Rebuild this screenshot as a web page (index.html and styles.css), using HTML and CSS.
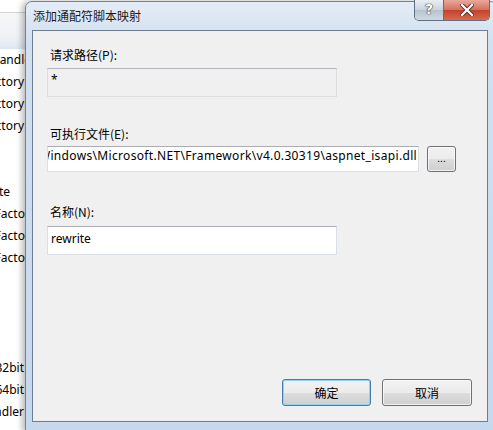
FILE: index.html
```html
<!DOCTYPE html>
<html lang="zh-CN">
  <head>
    <meta charset="utf-8">
    <link rel="stylesheet" href="styles.css">
  </head>
  <body>
    <div class="backlist">
      <div class="back-head"></div>
      <div class="back-sel"></div>
      <div class="row cut"><span>ISAPIHandler</span></div>
      <div class="row"><span>StaticDirectory</span></div>
      <div class="row"><span>StaticDirectory</span></div>
      <div class="row"><span>StaticDirectory</span></div>
      <div class="row"></div>
      <div class="row"></div>
      <div class="row short-row"><span>rewrite</span></div>
      <div class="row cut"><span>HandlerFactory</span></div>
      <div class="row cut"><span>HandlerFactory</span></div>
      <div class="row cut"><span>HandlerFactory</span></div>
      <div class="row"></div>
      <div class="row"></div>
      <div class="row"></div>
      <div class="row"></div>
      <div class="row"><span>ISAPI-dll-32bit</span></div>
      <div class="row"><span>ISAPI-dll-64bit</span></div>
      <div class="row"><span>StaticHandler</span></div>
    </div>

    <div class="dialog">
      <div class="titlebar">
        <div class="title">添加通配符脚本映射</div>
        <div class="caption-btns">
          <div class="cap-help">?</div>
          <div class="cap-close">
            <svg width="14" height="12" viewBox="0 0 14 12">
              <path d="M2 1 L12 11 M12 1 L2 11" stroke="#5a2a22" stroke-width="4" stroke-linecap="square"/>
              <path d="M2 1 L12 11 M12 1 L2 11" stroke="#fff" stroke-width="2.2" stroke-linecap="square"/>
            </svg>
          </div>
        </div>
      </div>

      <div class="client">
        <div class="label first">请求路径(P):</div>
        <div class="textbox disabled short">*</div>

        <div class="label second">可执行文件(E):</div>
        <div class="path-row">
          <div class="textbox path"><span>Windows\Microsoft.NET\Framework\v4.0.30319\aspnet_isapi.dll</span></div>
          <div class="btn browse">...</div>
        </div>

        <div class="label third">名称(N):</div>
        <div class="textbox short name">rewrite</div>

        <div class="actions">
          <div class="btn ok">确定</div>
          <div class="btn cancel">取消</div>
        </div>
      </div>
    </div>
  </body>
</html>
```

FILE: styles.css
```css
body {
  margin: 0;
  width: 493px;
  height: 430px;
  overflow: hidden;
  display: flex;
  background: #fff;
  font-family: "Noto Sans", "Noto Sans CJK SC", sans-serif;
  font-size: 12px;
  color: #000;
}

.backlist {
  width: 25px;
  flex: none;
  display: flex;
  flex-direction: column;
  background: #fff;
}
.back-head {
  height: 12px;
  border-bottom: 1px solid #d5d5d5;
}
.back-sel {
  height: 36px;
  background: linear-gradient(#f6f7f9, #eef2f6 70%, #dde7f2);
}
.row {
  height: 22px;
  line-height: 22px;
  display: flex;
  justify-content: flex-end;
  overflow: hidden;
  white-space: nowrap;
  padding-right: 1px;
}
.row span {
  flex: none;
}
.row.cut span {
  margin-right: -12px;
}
.row.short-row {
  padding-right: 15px;
}

.dialog {
  flex: none;
  width: 470px;
  height: 429px;
  margin-top: 1px;
  border: 1px solid #6f8297;
  border-radius: 7px 7px 0 0;
  background: linear-gradient(#e4ecf6, #d2e0f0 40px, #c6d8ee);
  box-shadow: -3px 0 6px rgba(0, 0, 0, 0.28);
  display: flex;
  flex-direction: column;
}

.titlebar {
  height: 28px;
  display: flex;
  padding-left: 7px;
  padding-right: 6px;
}
.title {
  line-height: 28px;
  font-family: "Noto Sans CJK SC", sans-serif;
  font-size: 12px;
  color: #1a1a1a;
}
.caption-btns {
  margin-left: auto;
  display: flex;
  height: 20px;
  margin-top: -2px;
  border: 1px solid #5f6f80;
  border-top: none;
  border-radius: 0 0 5px 5px;
  overflow: hidden;
}
.cap-help {
  width: 28px;
  text-align: center;
  line-height: 19px;
  font-family: "DejaVu Sans", sans-serif;
  font-size: 14px;
  font-weight: bold;
  color: #fff;
  text-shadow: 0 0 1px #333, 0 0 1px #333, 0 0 1px #333;
  background: linear-gradient(#e9eef3, #c9d3dd 50%, #b6c3d0 51%, #cfd9e3);
  border-right: 1px solid #5f6f80;
}
.cap-close {
  width: 45px;
  display: flex;
  align-items: center;
  justify-content: center;
  background: linear-gradient(#e7a89c, #d4705e 50%, #c4402c 51%, #d66a50);
}

.client {
  margin-left: 6px;
  width: 456px;
  height: 392px;
  box-sizing: border-box;
  border: 1px solid #6e7e91;
  background: #f0f0f0;
  display: flex;
  flex-direction: column;
  padding: 16px 15px 15px 14px;
}

.label {
  line-height: 16px;
  margin-left: 3px;
  font-family: "Noto Sans CJK SC", sans-serif;
}
.label.second {
  margin-top: 29px;
}
.label.third {
  margin-top: 32px;
}

.textbox {
  box-sizing: border-box;
  border: 1px solid #dbdfe6;
  border-top-color: #abadb3;
  background: #fff;
  padding: 3px 3px;
  line-height: 16px;
  white-space: nowrap;
  overflow: hidden;
}
.short {
  width: 290px;
  height: 29px;
}
.first + .textbox {
  margin-top: 5px;
}
.disabled {
  background: #f0f0f0;
  border-color: #dcdee0;
  border-top-color: #b5b8bc;
}
.name {
  margin-top: 6px;
  padding-top: 4px;
}

.path-row {
  display: flex;
  margin-top: 4px;
}
.path {
  width: 372px;
  height: 26px;
  display: flex;
  justify-content: flex-end;
  padding: 1px 1px 0 0;
  letter-spacing: 0.33px;
}
.path span {
  flex: none;
}

.btn {
  box-sizing: border-box;
  border: 1px solid #707070;
  border-radius: 3px;
  background: linear-gradient(#f2f2f2, #ebebeb 50%, #dddddd 51%, #cfcfcf);
  box-shadow: inset 0 0 0 1px rgba(255, 255, 255, 0.7);
  display: flex;
  align-items: center;
  justify-content: center;
  font-family: "Noto Sans CJK SC", sans-serif;
}
.browse {
  width: 29px;
  height: 26px;
  margin-left: 8px;
  font-size: 10px;
  line-height: 10px;
  padding-bottom: 2px;
}

.actions {
  margin-top: auto;
  display: flex;
  justify-content: flex-end;
  gap: 11px;
}
.ok,
.cancel {
  height: 27px;
}
.ok {
  width: 89px;
  border-color: #3c7fb1;
  box-shadow: inset 0 0 0 1px #8fd2f5;
}
.cancel {
  width: 90px;
}
```
